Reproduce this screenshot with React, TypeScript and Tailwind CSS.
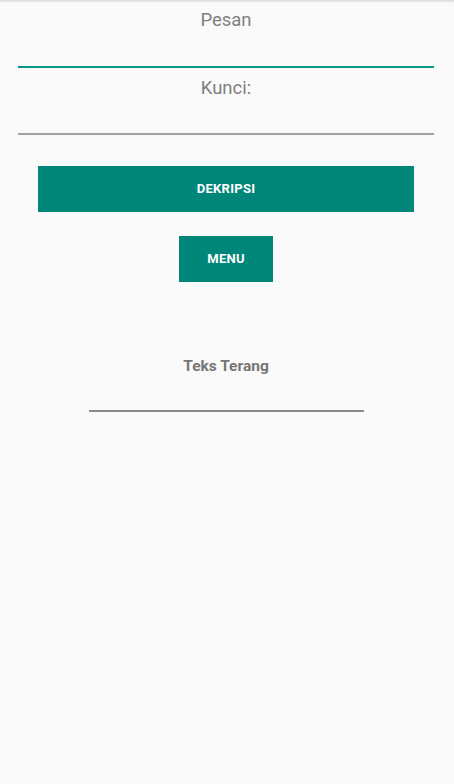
export default function App() {
  return (
    <div
      className="min-h-[784px] w-full bg-[#fafafa] shadow-[inset_0_3px_3px_-2px_rgba(0,0,0,0.18)]"
      style={{ fontFamily: 'Roboto, "Noto Sans", sans-serif' }}
    >
      <div className="w-[452px]">
        {/* form inputs */}
        <div className="px-[18px] pt-[9px]">
          <p className="text-center text-[18.5px] leading-[23px] text-[#808080]">Pesan</p>
          <div className="h-[36px] border-b-2 border-[#009688]" />
          <p className="mt-[9px] text-center text-[18.5px] leading-[23px] text-[#808080]">Kunci:</p>
          <div className="h-[35px] border-b-2 border-[#a3a3a3]" />
        </div>

        {/* buttons */}
        <div className="flex flex-col items-center pt-[31px]">
          <button className="h-[46px] w-[376px] bg-[#00877a] text-[13px] font-bold tracking-[0.02em] text-white">
            DEKRIPSI
          </button>
          <button className="mt-[24px] h-[46px] w-[94px] bg-[#00877a] text-[13px] font-bold tracking-[0.02em] text-white">
            MENU
          </button>
        </div>

        {/* result */}
        <div className="flex flex-col items-center pt-[75px]">
          <p className="text-[15.5px] font-bold leading-[18px] text-[#767676]">Teks Terang</p>
          <div className="mt-[35px] h-[2px] w-[275px] bg-[#8a8a8a]" />
        </div>
      </div>
    </div>
  );
}
